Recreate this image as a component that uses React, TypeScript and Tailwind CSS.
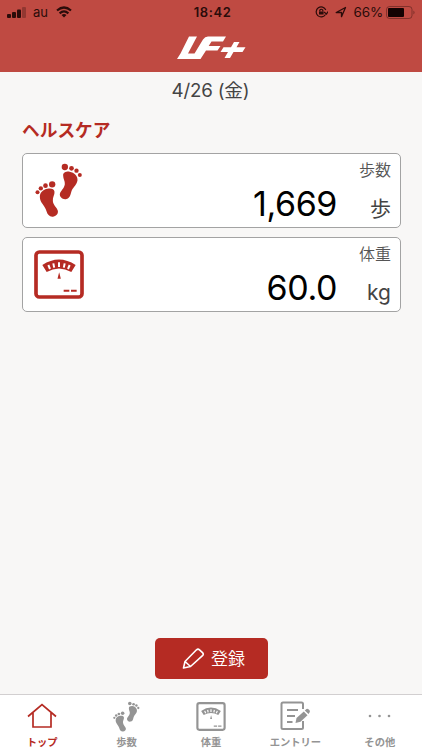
import type { ReactNode } from 'react';

type IconProps = { className?: string };

const Feet = ({ className }: IconProps) => (
  <svg viewBox="45 25 143 162" fill="currentColor" className={className}>
    <circle cx="134" cy="37" r="9.5" />
    <circle cx="154" cy="41" r="7" />
    <circle cx="169" cy="48" r="6.5" />
    <circle cx="179" cy="61" r="6" />
    <path d="M129 63C128 54 138 50 148 51C163 53 173 64 172 77C170 90 160 97 155 107C151 116 152 130 139 133C128 136 118 127 119 118C121 109 132 102 134 89C135 79 129 72 129 63Z" />
    <circle cx="96" cy="89" r="9.5" />
    <circle cx="76" cy="93" r="7" />
    <circle cx="62" cy="101" r="6.5" />
    <circle cx="52" cy="113" r="6" />
    <path d="M59 126C59 113 69 104 82 102C94 100 102 103 103 111C104 120 97 127 98 139C99 152 110 158 113 168C115 177 107 185 98 186C88 187 82 180 79 170C76 153 59 145 59 126Z" />
  </svg>
);

const Scale = ({ className }: IconProps) => (
  <svg viewBox="42 43 150 147" fill="none" stroke="currentColor" className={className}>
    <rect x="48" y="49" width="138" height="135" rx="10" strokeWidth="11" />
    <path d="M67 88Q117 55 167 88L154 109Q117 88 80 109Z" fill="currentColor" stroke="none" />
    <path d="M85 88l5 12M100 83l2.500 13M117 80v14M134 83l-2.500 13M149 88l-5 12" stroke="white" strokeWidth="6" />
    <path d="M117.500 110l5 19h-10z" fill="currentColor" stroke="none" />
    <path d="M131 165h17M153 165h17" strokeWidth="6" />
  </svg>
);

const Home = ({ className }: IconProps) => (
  <svg viewBox="0 0 30 26" fill="none" stroke="currentColor" strokeWidth="1.7" className={className}>
    <path d="M1 13.500L15 1.500L29 13.500M6 10V24H24V10" />
  </svg>
);

const Entry = ({ className }: IconProps) => (
  <svg viewBox="0 0 30 30" fill="none" stroke="currentColor" className={className}>
    <path d="M23 8V3Q23 1.500 21.500 1.500H3Q1.500 1.500 1.500 3V26.500Q1.500 28 3 28H21.500Q23 28 23 26.500V20" strokeWidth="2" />
    <path d="M7 9H18M7 15H15M7 21H12.500" strokeWidth="2" />
    <path d="M15.500 22L16.500 17L23.800 10.500L27.500 14.200L20.500 20.800Z" fill="currentColor" stroke="none" />
    <path d="M24.800 9.500L26.500 8Q27.500 7.300 28.500 8.300L29.500 9.300Q30.300 10.500 29.500 11.500L28.500 13Z" fill="currentColor" stroke="none" />
  </svg>
);

const More = ({ className }: IconProps) => (
  <svg viewBox="0 0 24 4" fill="currentColor" className={className}>
    <circle cx="2" cy="2" r="1.300" />
    <circle cx="11.500" cy="2" r="1.300" />
    <circle cx="21" cy="2" r="1.300" />
  </svg>
);

const Logo = () => (
  <svg viewBox="0 0 69 25" fill="white" className="mr-[-1px] h-[25px] w-[69px]">
    <path d="M12 .5H20L11 17.500H17.500L26 3.500Q28 .5 31 .5H49L46 5.500H34.500L31.700 10H43.500L40.500 14.500H29L23.500 23H0L3.500 17.500Z" />
    <path d="M57 6H62.500L59.500 11.200H68.500L65.500 16H56.500L53 22H47.500L51 16H43.500L46.500 11.200H54Z" />
  </svg>
);

const StatusBar = () => (
  <div className="grid h-6 grid-cols-3 items-center text-[13px] text-[#2b0c0a]">
    <div className="flex items-center pl-[7px]">
      <svg viewBox="0 0 19 11" fill="currentColor" className="h-[11px] w-[19px]">
        <rect x="0" y="7" width="4" height="4" rx="1" />
        <rect x="5" y="5" width="4" height="6" rx="1" />
        <rect x="10" y="2.500" width="4" height="8.500" rx="1" />
        <rect x="15" y="0" width="4" height="11" rx="1" opacity=".3" />
      </svg>
      <span className="ml-[7px] pt-px">au</span>
      <svg viewBox="0 0 16 12" fill="none" stroke="currentColor" strokeWidth="2.200" className="ml-2 h-3 w-4">
        <path d="M1 4.500Q8-1.500 15 4.500M3.600 7.300Q8 3.600 12.400 7.300" />
        <path d="M5.500 9Q8 7 10.500 9L8 11.500Z" fill="currentColor" stroke="none" />
      </svg>
    </div>
    <span className="pt-px pl-[3px] text-center font-semibold tracking-[0.6px]">18:42</span>
    <div className="flex items-center justify-end pr-[6px]">
      <svg viewBox="0 0 13 12" fill="none" stroke="currentColor" strokeWidth="1.200" className="h-3 w-[13px]">
        <path d="M10.800 4A5 5 0 1 0 10.500 8.500M9 6l2.500 2L13 5.500" />
        <path d="M4.800 5.500V4.200Q6.300 2.300 7.800 4.200V5.500" />
        <rect x="4" y="5.500" width="4.600" height="3" fill="currentColor" stroke="none" />
      </svg>
      <svg viewBox="0 0 12 12" fill="none" stroke="currentColor" strokeWidth="1.300" strokeLinejoin="round" className="ml-[7px] h-3 w-3">
        <path d="M1.200 6.500L10.500 1.500L6.500 10.700V6.500Z" />
      </svg>
      <span className="ml-[7px] pt-px text-[13.500px] tracking-[-0.2px]">66%</span>
      <svg viewBox="0 0 30 13" className="ml-[3px] h-[13px] w-[30px]">
        <rect x=".5" y=".5" width="25.500" height="12" rx="3" fill="none" stroke="currentColor" opacity=".4" />
        <rect x="2" y="2" width="16" height="9" rx="1" fill="#140202" />
        <path d="M27.500 4.500Q29.500 6.500 27.500 8.500Z" fill="currentColor" opacity=".5" />
      </svg>
    </div>
  </div>
);

type CardProps = { icon: ReactNode; label: string; value: string; unit: string };

const HealthCard = ({ icon, label, value, unit }: CardProps) => (
  <div className="flex h-[75px] justify-between rounded-[5px] border border-[#a3a3a3] bg-white pr-[9px]">
    {icon}
    <div className="flex flex-col items-end">
      <span className="mt-1 text-base leading-6 font-[350] text-[#555]">{label}</span>
      <div className="mt-[2px] flex h-10 items-baseline leading-10">
        <span className="text-[34px] tracking-[-0.4px] text-black">{value}</span>
        <span className="w-[54px] text-right text-[21px] font-[380] text-[#444]">{unit}</span>
      </div>
    </div>
  </div>
);

const tabs = [
  { label: 'トップ', icon: <Home className="h-[26px] w-[30px]" />, active: true },
  { label: '歩数', icon: <Feet className="h-[31px] w-[27px]" /> },
  { label: '体重', icon: <Scale className="h-[29px] w-[30px]" /> },
  { label: 'エントリー', icon: <Entry className="h-[30px] w-[30px]" /> },
  { label: 'その他', icon: <More className="h-1 w-6" /> },
];

export default function App() {
  return (
    <div className="flex h-[750px] w-[422px] flex-col overflow-hidden bg-[#f8f7f6] font-[Inter,'Noto_Sans_CJK_JP',sans-serif]">
      <header className="h-[72px] shrink-0 bg-[#bf4a42]">
        <StatusBar />
        <div className="mt-3 flex justify-center">
          <Logo />
        </div>
      </header>
      <main className="flex flex-1 flex-col pr-[21px] pl-[22px]">
        <div className="mt-[4px] pr-[2px] text-center text-[18.700px] leading-[30px] font-[380] tracking-[-0.2px] text-[#444]">4/26 (金)</div>
        <h1 className="mt-[13px] text-[17.700px] leading-6 font-bold text-[#b52b23]">ヘルスケア</h1>
        <div className="mt-[10px] flex flex-col gap-[9px] text-[#b52b23]">
          <HealthCard icon={<Feet className="mt-[9px] ml-3 h-[54px] w-12" />} label="歩数" value="1,669" unit="歩" />
          <HealthCard icon={<Scale className="mt-3 ml-[11px] h-[49px] w-[50px]" />} label="体重" value="60.0" unit="kg" />
        </div>
        <button className="mt-auto mr-px mb-[15px] flex h-[41px] w-[113px] items-center justify-center gap-[6px] self-center rounded-[5px] bg-[#b52b23] pt-[2px] pl-[5px] text-[17px] font-[350] text-white">
          <svg viewBox="0 0 23 23" fill="none" stroke="currentColor" strokeWidth="1.600" strokeLinejoin="round" className="mb-[2px] h-[23px] w-[23px]">
            <path d="M1.500 21L3 14.500L14.500 2.800Q16 1.500 17.500 2.800L20.500 5.700Q22 7.200 20.500 8.700L8.500 19.500ZM3 14.500L8.500 19.500" />
          </svg>
          登録
        </button>
      </main>
      <nav className="grid h-14 shrink-0 grid-cols-5 border-t border-[#d2cfd0] bg-white">
        {tabs.map(({ label, icon, active }) => (
          <div key={label} className={`flex flex-col items-center ${active ? 'text-[#b52b23]' : 'text-[#949494]'}`}>
            <div className="mt-[5px] flex h-8 items-center">{icon}</div>
            <span className="mt-px text-[10.300px] leading-[18px] font-bold whitespace-nowrap">{label}</span>
          </div>
        ))}
      </nav>
    </div>
  );
}
